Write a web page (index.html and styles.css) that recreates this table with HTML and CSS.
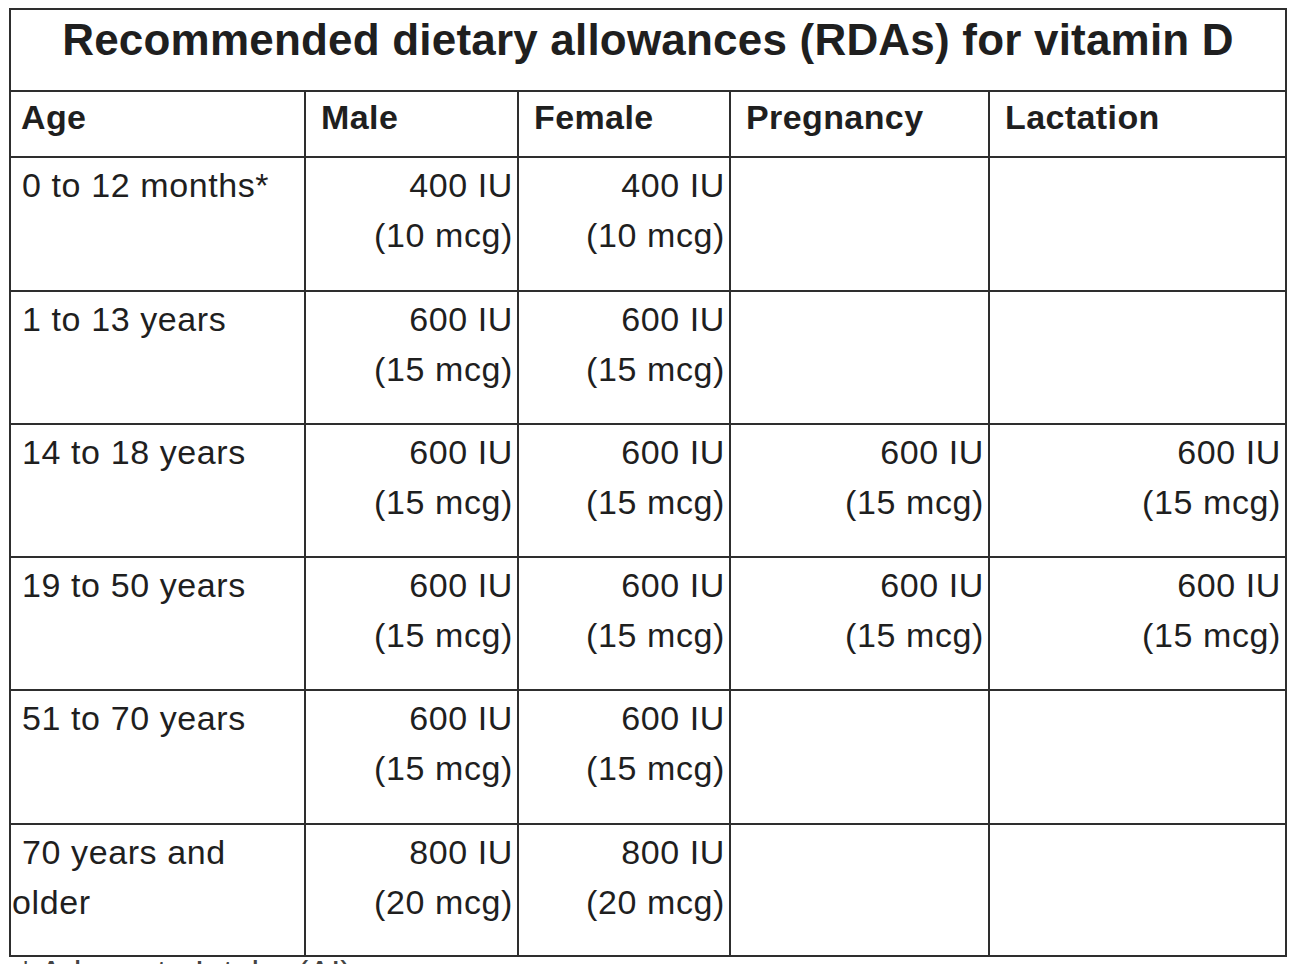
FILE: index.html
```html
<!DOCTYPE html>
<html lang="en">
<head>
<meta charset="utf-8">
<title>RDAs for vitamin D</title>
<link rel="stylesheet" href="styles.css">
</head>
<body>
<table class="rda">
  <colgroup>
    <col class="c-age">
    <col class="c-male">
    <col class="c-female">
    <col class="c-preg">
    <col class="c-lact">
  </colgroup>
  <thead>
    <tr class="title-row"><th colspan="5" class="title">Recommended dietary allowances (RDAs) for vitamin D</th></tr>
    <tr class="head-row">
      <th class="h h-age">Age</th>
      <th class="h">Male</th>
      <th class="h">Female</th>
      <th class="h">Pregnancy</th>
      <th class="h">Lactation</th>
    </tr>
  </thead>
  <tbody>
    <tr class="tall">
      <td class="age">0 to 12 months*</td>
      <td class="val">400 IU<br>(10 mcg)</td>
      <td class="val">400 IU<br>(10 mcg)</td>
      <td class="val"></td>
      <td class="val"></td>
    </tr>
    <tr>
      <td class="age">1 to 13 years</td>
      <td class="val">600 IU<br>(15 mcg)</td>
      <td class="val">600 IU<br>(15 mcg)</td>
      <td class="val"></td>
      <td class="val"></td>
    </tr>
    <tr>
      <td class="age">14 to 18 years</td>
      <td class="val">600 IU<br>(15 mcg)</td>
      <td class="val">600 IU<br>(15 mcg)</td>
      <td class="val">600 IU<br>(15 mcg)</td>
      <td class="val">600 IU<br>(15 mcg)</td>
    </tr>
    <tr>
      <td class="age">19 to 50 years</td>
      <td class="val">600 IU<br>(15 mcg)</td>
      <td class="val">600 IU<br>(15 mcg)</td>
      <td class="val">600 IU<br>(15 mcg)</td>
      <td class="val">600 IU<br>(15 mcg)</td>
    </tr>
    <tr class="tall">
      <td class="age">51 to 70 years</td>
      <td class="val">600 IU<br>(15 mcg)</td>
      <td class="val">600 IU<br>(15 mcg)</td>
      <td class="val"></td>
      <td class="val"></td>
    </tr>
    <tr class="short">
      <td class="age">70 years and older</td>
      <td class="val">800 IU<br>(20 mcg)</td>
      <td class="val">800 IU<br>(20 mcg)</td>
      <td class="val"></td>
      <td class="val"></td>
    </tr>
  </tbody>
</table>
<p class="note">* Adequate Intake (AI)</p>
</body>
</html>
```

FILE: styles.css
```css
html, body {
  margin: 0;
  padding: 0;
  background: #ffffff;
}

body {
  font-family: "Liberation Sans", Arial, sans-serif;
  color: #1f1f1f;
  padding: 8px 0 0 9px;
}

.rda {
  border-collapse: collapse;
  table-layout: fixed;
  width: 1278px;
}

.c-age { width: 295px; }
.c-male { width: 213px; }
.c-female { width: 212px; }
.c-preg { width: 259px; }
.c-lact { width: 297px; }

.rda th,
.rda td {
  border: 2px solid #2e2e2e;
  vertical-align: top;
}

.title {
  height: 82px;
  box-sizing: border-box;
  padding: 5px 0 0;
  font-size: 44px;
  font-weight: bold;
  letter-spacing: 0.2px;
  text-align: center;
  line-height: 50px;
}

.h {
  height: 66px;
  box-sizing: border-box;
  padding: 5px 0 0 15px;
  font-size: 34px;
  font-weight: bold;
  text-align: left;
  line-height: 40px;
  letter-spacing: 0.4px;
}

.h-age {
  padding-left: 10px;
}

.rda td {
  height: 133px;
  box-sizing: border-box;
  font-size: 34px;
  line-height: 50px;
  letter-spacing: 0.6px;
  padding: 2px 4px 0 1px;
}

.rda tr.tall td {
  height: 134px;
}

.rda tr.short td {
  height: 132px;
}

.rda td.age {
  text-indent: 10px;
}

.rda td.val {
  text-align: right;
}

.note {
  margin: -2px 0 0 10px;
  font-size: 34px;
  line-height: 34px;
  color: #444;
}
```
